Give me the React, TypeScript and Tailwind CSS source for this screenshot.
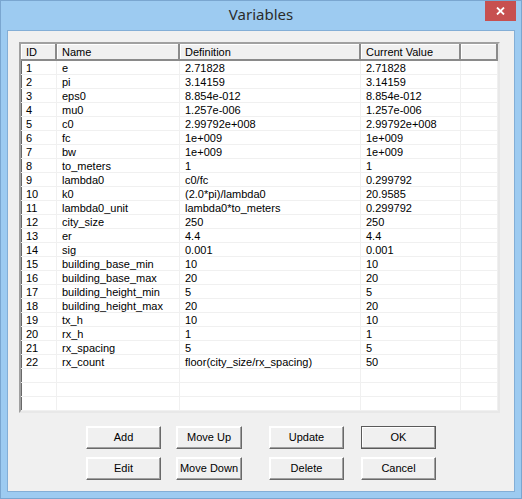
import React from 'react';

const rows: [string, string, string][] = [
  ['e', '2.71828', '2.71828'],
  ['pi', '3.14159', '3.14159'],
  ['eps0', '8.854e-012', '8.854e-012'],
  ['mu0', '1.257e-006', '1.257e-006'],
  ['c0', '2.99792e+008', '2.99792e+008'],
  ['fc', '1e+009', '1e+009'],
  ['bw', '1e+009', '1e+009'],
  ['to_meters', '1', '1'],
  ['lambda0', 'c0/fc', '0.299792'],
  ['k0', '(2.0*pi)/lambda0', '20.9585'],
  ['lambda0_unit', 'lambda0*to_meters', '0.299792'],
  ['city_size', '250', '250'],
  ['er', '4.4', '4.4'],
  ['sig', '0.001', '0.001'],
  ['building_base_min', '10', '10'],
  ['building_base_max', '20', '20'],
  ['building_height_min', '5', '5'],
  ['building_height_max', '20', '20'],
  ['tx_h', '10', '10'],
  ['rx_h', '1', '1'],
  ['rx_spacing', '5', '5'],
  ['rx_count', 'floor(city_size/rx_spacing)', '50'],
];

const colW = ['w-[36px]', 'w-[123px]', 'w-[181px]', 'w-[100px]', 'flex-1'];
const headers = ['ID', 'Name', 'Definition', 'Current Value', ''];

function Btn({ label, w, ml, def }: { label: string; w: string; ml: string; def?: boolean }) {
  return (
    <button
      type="button"
      className={`${w} ${ml} h-[23px] bg-[#f0f0f0] text-[11px] text-black border ${
        def ? 'border-[#5a5a5a]' : 'border-t-white border-l-white border-r-[#696969] border-b-[#696969]'
      } shadow-[inset_-1px_-1px_0_#a0a0a0,inset_1px_1px_0_#ffffff]`}
    >
      {label}
    </button>
  );
}

export default function App() {
  const data = [
    ...rows.map((r, i) => [String(i + 1), ...r, '']),
    ['', '', '', '', ''],
    ['', '', '', '', ''],
    ['', '', '', '', ''],
  ];

  return (
    <div
      className="relative w-[522px] h-[499px] bg-[#9dcbf1] border border-[#7aa6d0] overflow-hidden"
      style={{ fontFamily: '"Liberation Sans", Arial, sans-serif' }}
    >
      {/* title bar */}
      <div className="h-[29px] flex items-center justify-center">
        <span className="text-[15px] text-[#2b2b2b] -mt-[2px]" style={{ fontFamily: '"Noto Sans", "Open Sans", sans-serif' }}>
          Variables
        </span>
      </div>
      <div className="absolute top-0 right-[5px] w-[31px] h-[20px] bg-[#c75050] flex items-center justify-center">
        <svg width="9" height="8" viewBox="0 0 9 8">
          <path d="M1 0.5 L8 7.5 M8 0.5 L1 7.5" stroke="#fff" strokeWidth="1.8" />
        </svg>
      </div>

      {/* client area */}
      <div className="ml-[6px] w-[508px] h-[462px] border border-[#83aed6] bg-[#f0f0f0] pt-[11px] pl-[11px]">
        {/* list view */}
        <div className="w-[481px] h-[371px] bg-white border-2 border-t-[#a0a0a0] border-l-[#a0a0a0] border-r-[#e8e8e8] border-b-[#e8e8e8] shadow-[inset_1px_1px_0_#696969] flex flex-col">
          <div className="flex h-[17px]">
            {headers.map((h, i) => (
              <div
                key={i}
                className={`${colW[i]} h-[17px] bg-[#f0f0f0] border-r-2 border-b-2 border-r-[#8a8a8a] border-b-[#8a8a8a] shadow-[inset_1px_1px_0_#ffffff] pl-[5px] text-[11px] leading-[16px] text-black whitespace-nowrap`}
              >
                {h}
              </div>
            ))}
          </div>
          {data.map((r, ri) => (
            <div key={ri} className="flex h-[14px]">
              {r.map((c, ci) => (
                <div
                  key={ci}
                  className={`${colW[ci]} h-[14px] border-r border-b border-[#f0f0f0] pl-[5px] text-[11px] leading-[14px] text-black whitespace-nowrap overflow-hidden`}
                >
                  {c}
                </div>
              ))}
            </div>
          ))}
        </div>

        {/* buttons */}
        <div className="mt-[13px] flex flex-col gap-[8px]">
          <div className="flex">
            <Btn label="Add" w="w-[75px]" ml="ml-[67px]" />
            <Btn label="Move Up" w="w-[66px]" ml="ml-[15px]" />
            <Btn label="Update" w="w-[75px]" ml="ml-[27px]" />
            <Btn label="OK" w="w-[75px]" ml="ml-[17px]" def />
          </div>
          <div className="flex">
            <Btn label="Edit" w="w-[75px]" ml="ml-[67px]" />
            <Btn label="Move Down" w="w-[66px]" ml="ml-[15px]" />
            <Btn label="Delete" w="w-[75px]" ml="ml-[27px]" />
            <Btn label="Cancel" w="w-[75px]" ml="ml-[17px]" />
          </div>
        </div>
      </div>
    </div>
  );
}
